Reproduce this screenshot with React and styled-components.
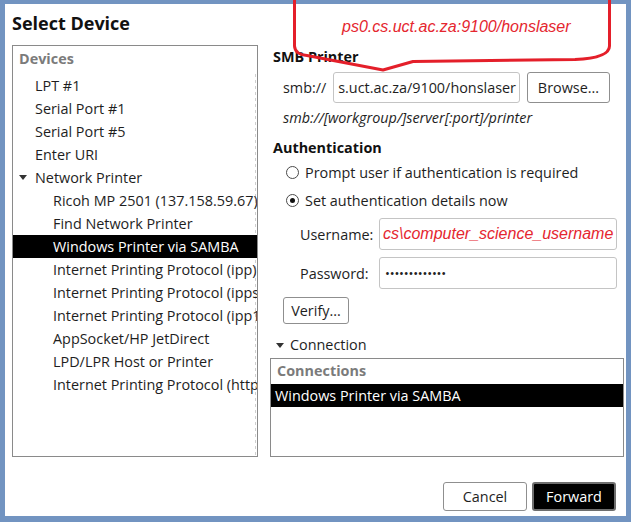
import React from 'react';
import styled, { createGlobalStyle } from 'styled-components';

const GlobalStyle = createGlobalStyle`
  html, body {
    margin: 0;
    padding: 0;
    background: #7294c1;
  }
  body {
    width: 631px;
    height: 522px;
    overflow: hidden;
    font-family: 'Open Sans', 'Noto Sans', sans-serif;
  }
`;

const Page = styled.div`
  position: relative;
  width: 631px;
  height: 522px;
  padding: 4px 5px 6px 5px;
  box-sizing: border-box;
`;

const Window = styled.div`
  width: 621px;
  height: 512px;
  background: #fff;
  box-sizing: border-box;
  padding: 8px 9px 0 7px;
  display: flex;
  flex-direction: column;
  color: #1e1e1e;
  font-size: 14.4px;
`;

const Title = styled.h1`
  margin: 0 0 11px 0;
  font-size: 18px;
  line-height: 22px;
  font-weight: 700;
  color: #111;
`;

const Main = styled.div`
  display: flex;
  gap: 12px;
  height: 412px;
`;

const ListBox = styled.div`
  width: ${p => p.$w || 'auto'};
  flex: ${p => (p.$w ? 'none' : '1')};
  height: ${p => p.$h || '100%'};
  margin-top: ${p => p.$mt || 0}px;
  border: 1px solid #8a8a8a;
  box-sizing: border-box;
  display: flex;
  flex-direction: column;
  overflow: hidden;
  background: #fff;
`;

const ListHeader = styled.div`
  height: ${p => p.$h}px;
  line-height: ${p => p.$h - 2}px;
  padding-left: 6px;
  font-weight: 700;
  color: #7b7b7b;
  flex: none;
`;

const Rows = styled.div`
  flex: 1;
  overflow: hidden;
  background: ${p =>
    p.$dashed
      ? 'linear-gradient(#cfcfcf 50%, transparent 0) right 1px top / 1px 6px repeat-y'
      : 'none'};
`;

const Row = styled.div`
  display: flex;
  align-items: center;
  height: 23px;
  padding-left: ${p => p.$pad}px;
  white-space: nowrap;
  overflow: hidden;
  background: ${p => (p.$selected ? '#000' : 'transparent')};
  color: ${p => (p.$selected ? '#fff' : 'inherit')};
`;

const Slot = styled.span`
  width: 16px;
  flex: none;
  display: flex;
  align-items: center;
`;

const Arrow = styled.span`
  width: 0;
  height: 0;
  border-left: 4px solid transparent;
  border-right: 4px solid transparent;
  border-top: 5px solid #333;
`;

const Right = styled.div`
  flex: 1;
  display: flex;
  flex-direction: column;
`;

const Section = styled.div`
  margin-top: ${p => p.$mt}px;
  padding-left: 3px;
  line-height: 20px;
  font-weight: 700;
  color: #111;
`;

const FieldRow = styled.div`
  display: flex;
  align-items: center;
  margin-top: ${p => p.$mt}px;
  height: ${p => p.$h}px;
  padding-left: ${p => p.$pl}px;
  padding-right: 7px;
`;

const Label = styled.span`
  width: ${p => p.$w}px;
  flex: none;
`;

const Input = styled.div`
  flex: ${p => (p.$w ? 'none' : '1')};
  width: ${p => (p.$w ? `${p.$w}px` : 'auto')};
  height: 100%;
  box-sizing: border-box;
  border: 1px solid #c4c4c4;
  border-radius: 3px;
  background: #fff;
  display: flex;
  align-items: center;
  justify-content: ${p => (p.$end ? 'flex-end' : 'flex-start')};
  padding: 0 3px;
  overflow: hidden;
  white-space: nowrap;
`;

const Annotated = styled.span`
  font-family: 'Liberation Sans', Arial, sans-serif;
  font-style: italic;
  font-size: 16px;
  color: #e5262f;
`;

const Dots = styled.span`
  font-size: 13px;
  letter-spacing: -0.2px;
  padding-left: 2px;
  color: #222;
`;

const Hint = styled.div`
  margin-top: 5px;
  padding-left: 13px;
  line-height: 20px;
  font-style: italic;
`;

const Button = styled.button`
  flex: none;
  width: ${p => p.$w}px;
  height: ${p => p.$h}px;
  margin-left: ${p => p.$ml || 0}px;
  margin-top: ${p => p.$mt || 0}px;
  box-sizing: border-box;
  border: ${p => (p.$primary ? '2px solid #6e6e6e' : '1px solid #8f8f8f')};
  border-radius: 3px;
  background: ${p => (p.$primary ? '#000' : '#fff')};
  color: ${p => (p.$primary ? '#fff' : '#1e1e1e')};
  font-family: inherit;
  font-size: 14.4px;
  padding: 0;
`;

const RadioRow = styled.label`
  display: flex;
  align-items: center;
  gap: 6px;
  height: 24px;
  margin-top: ${p => p.$mt}px;
  padding-left: 16px;
`;

const Radio = styled.span`
  width: 13px;
  height: 13px;
  box-sizing: border-box;
  border: 1px solid #4a4a4a;
  border-radius: 50%;
  display: flex;
  align-items: center;
  justify-content: center;
  &::after {
    content: '';
    width: 5px;
    height: 5px;
    border-radius: 50%;
    background: ${p => (p.$checked ? '#111' : 'transparent')};
  }
`;

const Expander = styled.div`
  display: flex;
  align-items: center;
  gap: 6px;
  margin-top: 11px;
  padding-left: 6px;
  line-height: 20px;
`;

const Footer = styled.div`
  display: flex;
  justify-content: flex-end;
  gap: 5px;
  padding-top: 25px;
  padding-right: 1px;
`;

const Callout = styled.div`
  position: absolute;
  left: 0;
  top: 0;
  width: 631px;
  height: 80px;
  pointer-events: none;
  svg {
    position: absolute;
    left: 0;
    top: 0;
  }
`;

const CalloutText = styled.span`
  position: absolute;
  left: 342px;
  top: 17px;
  font-family: 'Liberation Sans', Arial, sans-serif;
  font-style: italic;
  font-size: 16px;
  line-height: 20px;
  color: #e5262f;
`;

const devices = [
  { label: 'LPT #1', level: 0 },
  { label: 'Serial Port #1', level: 0 },
  { label: 'Serial Port #5', level: 0 },
  { label: 'Enter URI', level: 0 },
  { label: 'Network Printer', level: 0, open: true },
  { label: 'Ricoh MP 2501 (137.158.59.67)', level: 1 },
  { label: 'Find Network Printer', level: 1 },
  { label: 'Windows Printer via SAMBA', level: 1, selected: true },
  { label: 'Internet Printing Protocol (ipp)', level: 1 },
  { label: 'Internet Printing Protocol (ipps)', level: 1 },
  { label: 'Internet Printing Protocol (ipp14)', level: 1 },
  { label: 'AppSocket/HP JetDirect', level: 1 },
  { label: 'LPD/LPR Host or Printer', level: 1 },
  { label: 'Internet Printing Protocol (https)', level: 1 },
];

export default function App() {
  return (
    <Page>
      <GlobalStyle />
      <Window>
        <Title>Select Device</Title>
        <Main>
          <ListBox $w="246px">
            <ListHeader $h={28}>Devices</ListHeader>
            <Rows $dashed>
              {devices.map(d => (
                <Row key={d.label} $pad={6 + d.level * 18} $selected={d.selected}>
                  <Slot>{d.open && <Arrow />}</Slot>
                  {d.label}
                </Row>
              ))}
            </Rows>
          </ListBox>

          <Right>
            <Section $mt={2}>SMB Printer</Section>
            <FieldRow $mt={5} $h={31} $pl={13}>
              <Label $w={50}>smb://</Label>
              <Input $w={187} $end>s.uct.ac.za/9100/honslaser</Input>
              <Button $w={83} $h={31} $ml={7}>Browse...</Button>
            </FieldRow>
            <Hint>smb://[workgroup/]server[:port]/printer</Hint>

            <Section $mt={10}>Authentication</Section>
            <RadioRow $mt={2}>
              <Radio />
              Prompt user if authentication is required
            </RadioRow>
            <RadioRow $mt={4}>
              <Radio $checked />
              Set authentication details now
            </RadioRow>
            <FieldRow $mt={6} $h={32} $pl={30}>
              <Label $w={79}>Username:</Label>
              <Input>
                <Annotated>cs\computer_science_username</Annotated>
              </Input>
            </FieldRow>
            <FieldRow $mt={7} $h={32} $pl={30}>
              <Label $w={79}>Password:</Label>
              <Input>
                <Dots>•••••••••••••</Dots>
              </Input>
            </FieldRow>
            <Button $w={66} $h={27} $ml={13} $mt={8}>Verify...</Button>

            <Expander>
              <Arrow />
              Connection
            </Expander>
            <ListBox $h="98px" $mt={3}>
              <ListHeader $h={25}>Connections</ListHeader>
              <Row $pad={4} $selected>Windows Printer via SAMBA</Row>
            </ListBox>
          </Right>
        </Main>
        <Footer>
          <Button $w={84} $h={29}>Cancel</Button>
          <Button $w={84} $h={29} $primary>Forward</Button>
        </Footer>
      </Window>

      <Callout>
        <svg width="631" height="80" viewBox="0 0 631 80">
          <path
            d="M294.5,0 V46 Q295,54.5 307,55.5 L383,70 L413,61.5 L575,59.5 Q609.5,58 609.5,46 V0"
            fill="none"
            stroke="#e41f2a"
            strokeWidth="3"
            strokeLinejoin="round"
          />
        </svg>
        <CalloutText>ps0.cs.uct.ac.za:9100/honslaser</CalloutText>
      </Callout>
    </Page>
  );
}
